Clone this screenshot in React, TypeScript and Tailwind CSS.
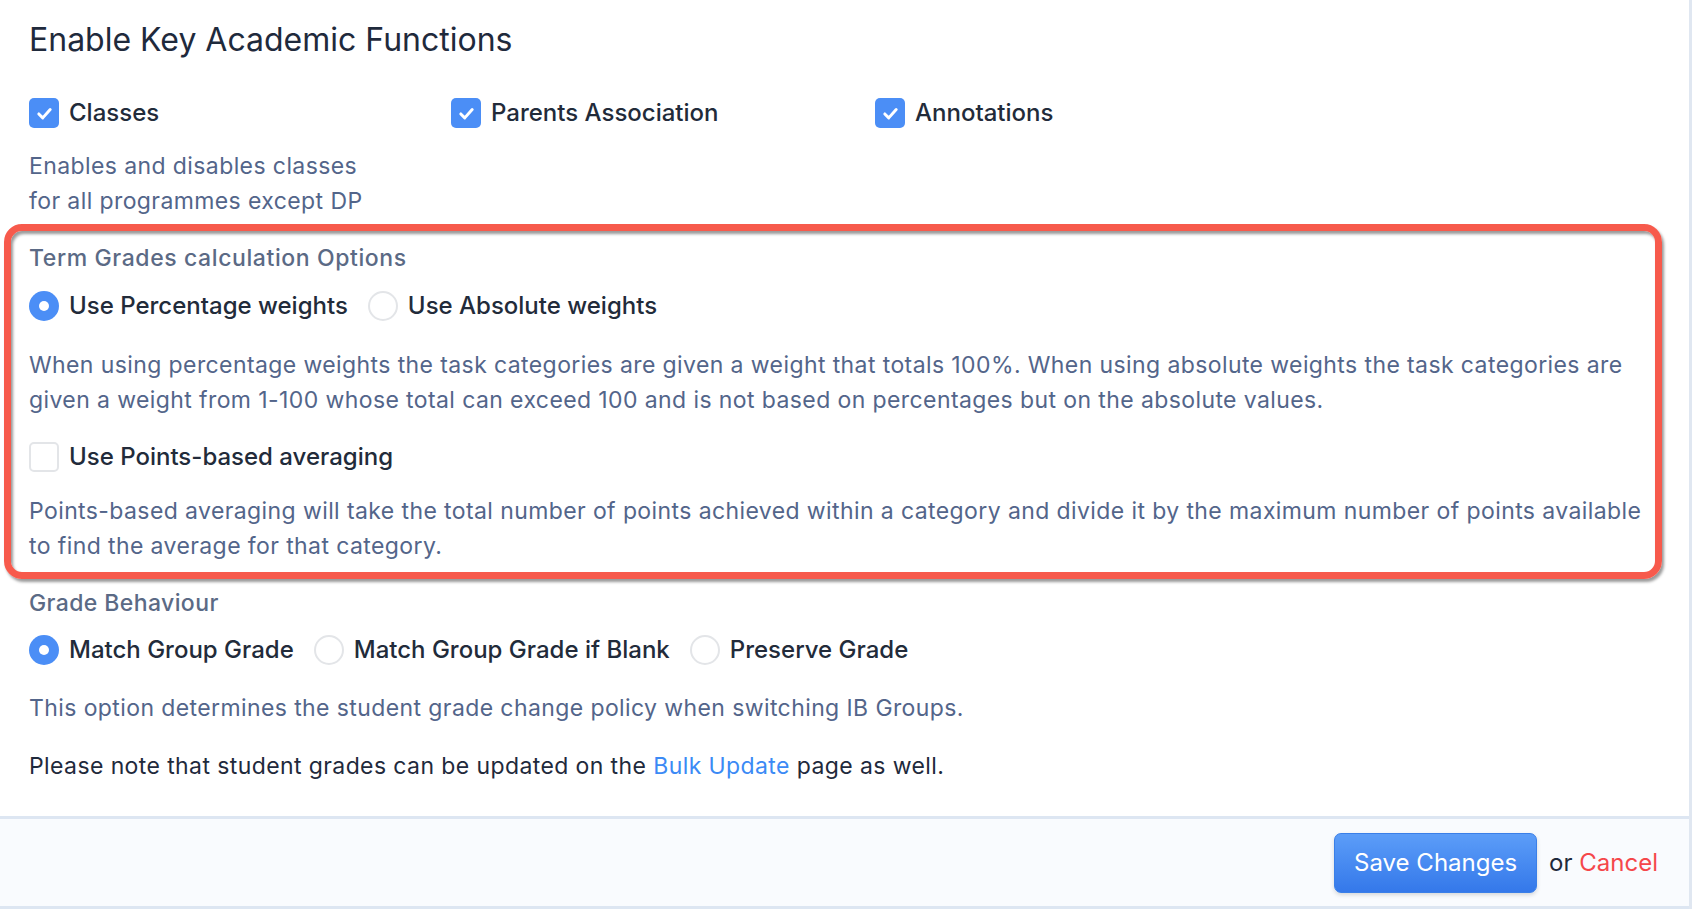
import { useState } from "react";

const font = { fontFamily: "Inter, 'Noto Sans', sans-serif" };

function Checkbox({ checked, onChange }: { checked: boolean; onChange: () => void }) {
  return (
    <button
      type="button"
      onClick={onChange}
      className={
        checked
          ? "flex h-[30px] w-[30px] shrink-0 items-center justify-center rounded-[5px] bg-[#4b8ef6]"
          : "h-[30px] w-[30px] shrink-0 rounded-[5px] border-2 border-[#e3e5e8] bg-white"
      }
    >
      {checked && (
        <svg viewBox="0 0 24 24" className="h-[21px] w-[21px]" fill="none" stroke="white" strokeWidth="3.4" strokeLinecap="round" strokeLinejoin="round">
          <polyline points="5.5 12.5 10 17 18.5 7.5" />
        </svg>
      )}
    </button>
  );
}

function Radio({ checked, onChange }: { checked: boolean; onChange: () => void }) {
  return (
    <button
      type="button"
      onClick={onChange}
      className={
        checked
          ? "flex h-[30px] w-[30px] shrink-0 items-center justify-center rounded-full bg-[#4b8ef6]"
          : "h-[30px] w-[30px] shrink-0 rounded-full border-2 border-[#e3e5e8] bg-white"
      }
    >
      {checked && <span className="h-[10px] w-[10px] rounded-full bg-white" />}
    </button>
  );
}

function Option({ label, children }: { label: string; children: React.ReactNode }) {
  return (
    <label className="flex items-center gap-[10px]">
      {children}
      <span className="text-[24px] font-medium leading-[30px] text-[#222b3a]">{label}</span>
    </label>
  );
}

export default function App() {
  const [features, setFeatures] = useState({ classes: true, parents: true, annotations: true });
  const [weights, setWeights] = useState<"percentage" | "absolute">("percentage");
  const [points, setPoints] = useState(false);
  const [behaviour, setBehaviour] = useState<"match" | "blank" | "preserve">("match");

  return (
    <div style={font} className="min-h-[912px] w-full bg-white">
      <div className="border-r-[3px] border-[#e0e7f1]">
        <div className="pl-[29px] pr-[35px] pt-[20px] pb-[32px]">
          <h1 className="text-[32px] font-normal leading-[40px] text-[#1f2a3c]">Enable Key Academic Functions</h1>

          <div className="mt-[38px] flex">
            <div className="w-[422px]">
              <Option label="Classes">
                <Checkbox checked={features.classes} onChange={() => setFeatures({ ...features, classes: !features.classes })} />
              </Option>
            </div>
            <div className="w-[424px]">
              <Option label="Parents Association">
                <Checkbox checked={features.parents} onChange={() => setFeatures({ ...features, parents: !features.parents })} />
              </Option>
            </div>
            <Option label="Annotations">
              <Checkbox checked={features.annotations} onChange={() => setFeatures({ ...features, annotations: !features.annotations })} />
            </Option>
          </div>

          <p className="mt-[21px] text-[23px] leading-[35px] tracking-[0.4px] text-[#53658a]">
            Enables and disables classes
            <br />
            for all programmes except DP
          </p>

          {/* highlighted block */}
          <div className="mt-[5px] -ml-[25px] -mr-[8px] rounded-[18px] border-[7px] border-[#f75a4c] pl-[18px] pr-[1px] pt-[12px] pb-[8px] shadow-[2px_3px_3px_rgba(0,0,0,0.4),inset_2px_3px_3px_rgba(0,0,0,0.4)]">
            <h2 className="text-[23px] font-medium leading-[30px] tracking-[0.6px] text-[#5b6a85]">Term Grades calculation Options</h2>
            <div className="mt-[18px] flex items-center gap-[20px]">
              <Option label="Use Percentage weights">
                <Radio checked={weights === "percentage"} onChange={() => setWeights("percentage")} />
              </Option>
              <Option label="Use Absolute weights">
                <Radio checked={weights === "absolute"} onChange={() => setWeights("absolute")} />
              </Option>
            </div>
            <p className="mt-[27px] text-[23px] leading-[35px] tracking-[0.4px] text-[#53658a]">
              When using percentage weights the task categories are given a weight that totals 100%. When using absolute weights the task categories are given a weight from 1-100 whose total can exceed 100 and is not based on percentages but on the absolute values.
            </p>
            <div className="mt-[24px]">
              <Option label="Use Points-based averaging">
                <Checkbox checked={points} onChange={() => setPoints(!points)} />
              </Option>
            </div>
            <p className="mt-[22px] text-[23px] leading-[35px] tracking-[0.4px] text-[#53658a]">
              Points-based averaging will take the total number of points achieved within a category and divide it by the maximum number of points available to find the average for that category.
            </p>
          </div>

          <h2 className="mt-[9px] text-[23px] font-medium leading-[30px] tracking-[0.4px] text-[#5b6a85]">Grade Behaviour</h2>
          <div className="mt-[17px] flex items-center gap-[20px]">
            <Option label="Match Group Grade">
              <Radio checked={behaviour === "match"} onChange={() => setBehaviour("match")} />
            </Option>
            <Option label="Match Group Grade if Blank">
              <Radio checked={behaviour === "blank"} onChange={() => setBehaviour("blank")} />
            </Option>
            <Option label="Preserve Grade">
              <Radio checked={behaviour === "preserve"} onChange={() => setBehaviour("preserve")} />
            </Option>
          </div>
          <p className="mt-[26px] text-[23px] leading-[35px] tracking-[0.4px] text-[#53658a]">
            This option determines the student grade change policy when switching IB Groups.
          </p>
          <p className="mt-[23px] text-[23px] leading-[35px] tracking-[0.4px] text-[#1f2a3c]">
            Please note that student grades can be updated on the <a className="text-[#3b8af5]">Bulk Update</a> page as well.
          </p>
        </div>

        <div className="flex h-[93px] items-center justify-end gap-[12px] border-y-[3px] border-[#dde6f2] bg-[#f9fbfe] pr-[31px]">
          <button className="h-[60px] rounded-[7px] border border-[#3a7fe8] bg-gradient-to-b from-[#5c9df8] to-[#3478ea] px-[19px] text-[24px] leading-none text-white shadow-[0_2px_4px_rgba(0,0,0,0.15)]">
            Save Changes
          </button>
          <span className="text-[24px] text-[#1f2a3c]">
            or <a className="text-[#f5474a]">Cancel</a>
          </span>
        </div>
      </div>
    </div>
  );
}
